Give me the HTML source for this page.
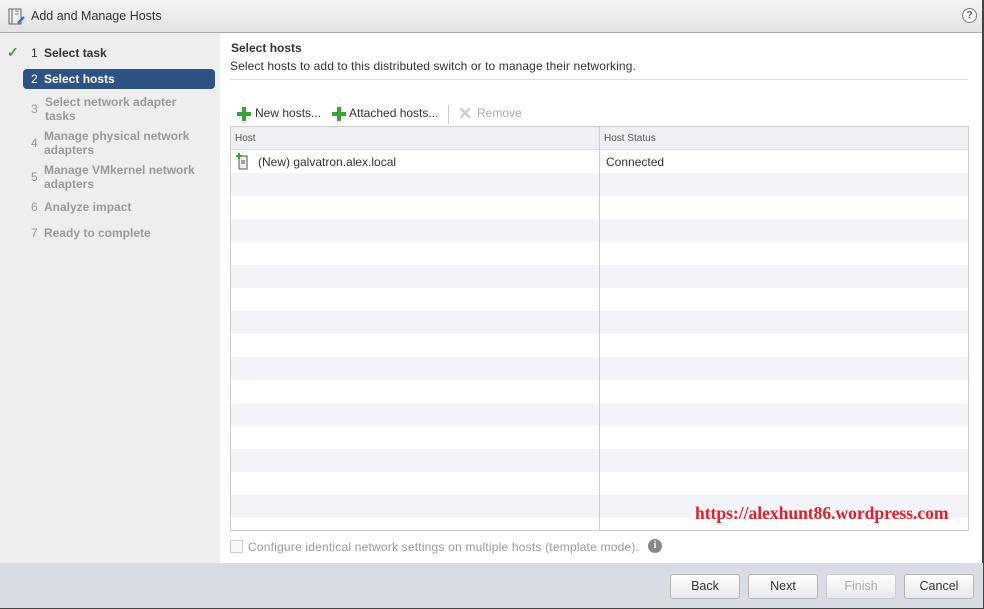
<!DOCTYPE html>
<html><head><style>
*{margin:0;padding:0;box-sizing:border-box}
body{width:984px;height:609px;overflow:hidden;font-family:"Liberation Sans",Arial,sans-serif;font-size:12px;color:#333;background:#fff;position:relative}
.abs{position:absolute}
#title{left:0;top:0;width:983px;height:33px;background:linear-gradient(#f4f4f4,#e3e3e3);border-bottom:1px solid #a9a9a9}
#left{left:0;top:33px;width:220px;height:530px;background:#eeeeee}
.step{position:absolute;left:31px;font-size:12px;color:#999;line-height:14px}
.step b{font-weight:normal;position:absolute;left:0}
.step span{position:absolute;left:13px;white-space:nowrap}
#footer{left:0;top:563px;width:983px;height:45px;background:#d9dde3}
.btn{position:absolute;top:574px;width:70px;height:25px;border:1px solid #b5b5b5;border-radius:3px;background:linear-gradient(#fdfdfd,#e9e9e9);text-align:center;line-height:23px;font-size:12.5px;color:#333}
</style></head><body>
<div class="abs" id="title"></div>
<svg class="abs" style="left:8px;top:8px" width="18" height="18" viewBox="0 0 18 18"><rect x="1" y="1" width="12" height="15" fill="#eee" stroke="#666"/><line x1="4" y1="1" x2="4" y2="16" stroke="#666"/><line x1="7" y1="3" x2="11" y2="3" stroke="#888"/><line x1="7" y1="6" x2="11" y2="6" stroke="#888"/><path d="M10 15 L16 9" stroke="#3a73b5" stroke-width="2.5"/></svg>
<div class="abs" style="left:31px;top:9px;font-size:12.5px;color:#333">Add and Manage Hosts</div>
<div class="abs" style="left:962px;top:8px;width:15px;height:15px;border:1px solid #777;border-radius:50%;font-size:10px;text-align:center;line-height:13px;color:#555;font-weight:bold;background:#fff">?</div>
<div class="abs" style="left:982px;top:0;width:2px;height:609px;background:#444"></div>
<div class="abs" style="left:0;top:607px;width:984px;height:2px;background:#444"></div>
<div class="abs" id="left"></div>
<div class="abs" style="left:7px;top:44px;color:#3aa335;font-size:14px;font-weight:bold">✓</div>
<div class="step" style="top:46px;color:#333;font-weight:bold"><b>1</b><span>Select task</span></div>
<div class="abs" style="left:23px;top:69px;width:192px;height:20px;background:#2c5383;border-radius:4px"></div>
<div class="step" style="top:72px;color:#fff;font-weight:bold"><b>2</b><span>Select hosts</span></div>
<div class="step" style="top:95px;width:180px;font-weight:bold"><b style="top:7px">3</b><span style="left:14px">Select network adapter<br>tasks</span></div>
<div class="step" style="top:129px;font-weight:bold"><b style="top:7px">4</b><span>Manage physical network<br>adapters</span></div>
<div class="step" style="top:163px;font-weight:bold"><b style="top:7px">5</b><span>Manage VMkernel network<br>adapters</span></div>
<div class="step" style="top:200px;font-weight:bold"><b>6</b><span>Analyze impact</span></div>
<div class="step" style="top:226px;font-weight:bold"><b>7</b><span>Ready to complete</span></div>
<div class="abs" style="left:231px;top:41px;font-weight:bold;font-size:12px;color:#333">Select hosts</div>
<div class="abs" style="left:230px;top:59px;font-size:12px;color:#333;letter-spacing:0.1px">Select hosts to add to this distributed switch or to manage their networking.</div>
<div class="abs" style="left:230px;top:79px;width:738px;height:1px;background:#ddd"></div>
<svg class="abs" style="left:237px;top:107px" width="14" height="14"><path d="M5 0h4v5h5v4h-5v5h-4v-5h-5v-4h5z" fill="#3aa335"/></svg>
<div class="abs" style="left:255px;top:106px;color:#333">New hosts...</div>
<svg class="abs" style="left:332px;top:107px" width="14" height="14"><path d="M5 0h4v5h5v4h-5v5h-4v-5h-5v-4h5z" fill="#3aa335"/></svg>
<div class="abs" style="left:349px;top:106px;color:#333">Attached hosts...</div>
<div class="abs" style="left:448px;top:105px;width:1px;height:19px;background:#ccc"></div>
<div class="abs" style="left:458px;top:104px;color:#ccc;font-size:17px;font-weight:bold">✕</div>
<div class="abs" style="left:477px;top:106px;color:#aaa">Remove</div>
<div class="abs" style="left:230px;top:126px;width:739px;height:405px;border:1px solid #ccc;background:repeating-linear-gradient(#fff 0 23px,#f2f4f7 23px 46px);background-position:0 23px"></div>
<div class="abs" style="left:231px;top:127px;width:737px;height:23px;background:#eef0f3;border-bottom:1px solid #ddd"></div>
<div class="abs" style="left:599px;top:127px;width:1px;height:403px;background:#ccc"></div>
<div class="abs" style="left:235px;top:133px;font-size:10px;color:#555">Host</div>
<div class="abs" style="left:604px;top:133px;font-size:10px;color:#555">Host Status</div>
<svg class="abs" style="left:236px;top:153px" width="14" height="18"><rect x="3" y="3" width="8" height="13" fill="#eee" stroke="#555"/><line x1="5" y1="8" x2="9" y2="8" stroke="#555"/><line x1="5" y1="10" x2="9" y2="10" stroke="#555"/><path d="M2 0h2v2h2v2h-2v2h-2v-2h-2v-2h2z" fill="#3aa335"/></svg>
<div class="abs" style="left:258px;top:155px">(New) galvatron.alex.local</div>
<div class="abs" style="left:606px;top:155px">Connected</div>
<div class="abs" style="left:695px;top:503px;font-family:'Liberation Serif',serif;font-weight:bold;font-size:17.5px;color:#e0202b">https://alexhunt86.wordpress.com</div>
<div class="abs" style="left:230px;top:540px;width:13px;height:13px;border:1px solid #ccc;background:#f8f8f8"></div>
<div class="abs" style="left:248px;top:540px;color:#999;letter-spacing:0.2px">Configure identical network settings on multiple hosts (template mode).</div>
<div class="abs" style="left:648px;top:539px;width:14px;height:14px;border-radius:50%;background:#888;color:#fff;font-weight:bold;font-size:10px;text-align:center;line-height:14px;font-family:'Liberation Serif',serif">i</div>
<div class="abs" id="footer"></div>
<div class="btn" style="left:670px">Back</div>
<div class="btn" style="left:748px">Next</div>
<div class="btn" style="left:826px;color:#aaa;border-color:#ccc">Finish</div>
<div class="btn" style="left:904px">Cancel</div>
</body></html>
